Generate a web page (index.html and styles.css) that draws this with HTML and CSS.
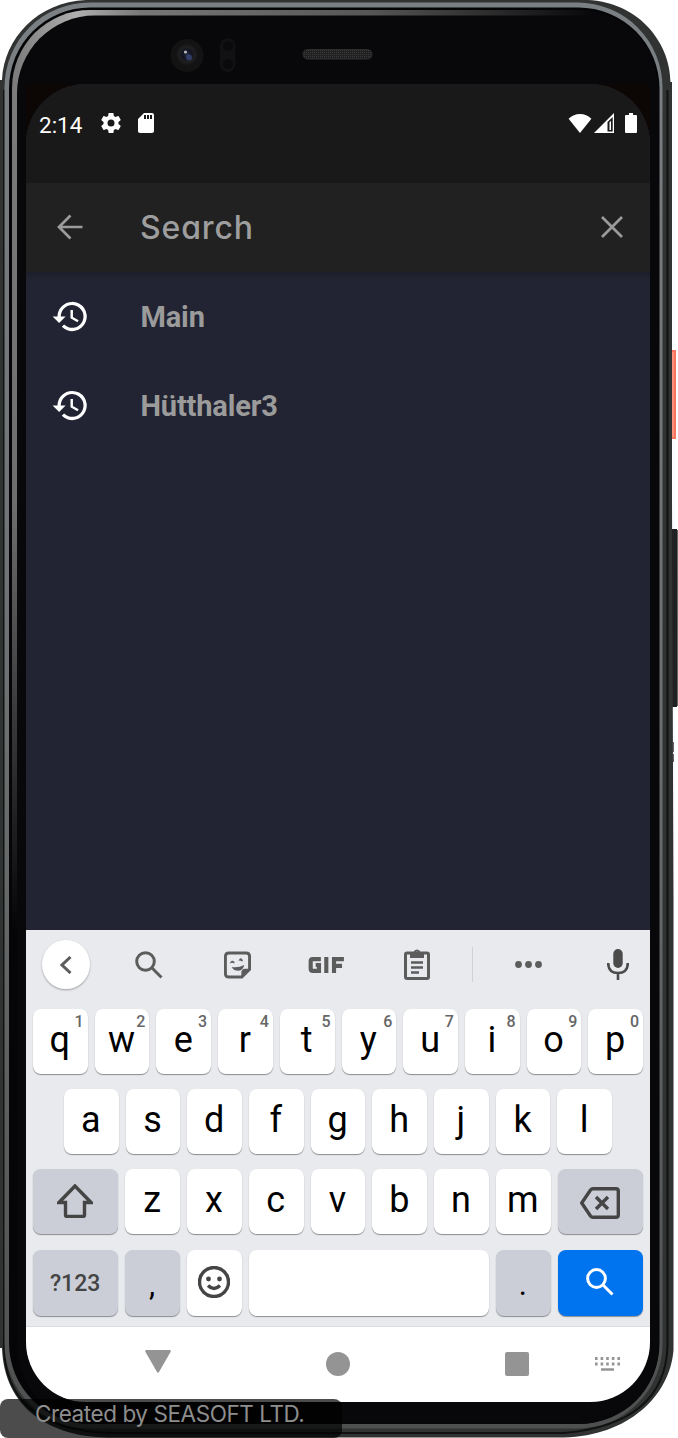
FILE: index.html
```html
<!DOCTYPE html>
<html lang="en">
<head>
<meta charset="utf-8">
<title>Search</title>
<link rel="stylesheet" href="styles.css">
</head>
<body>
<div class="phone">
  <svg class="frame" width="678" height="1438" viewBox="0 0 678 1438" aria-hidden="true">
    <defs>
      <linearGradient id="rim" x1="0" y1="0" x2="0" y2="1"><stop offset="0" stop-color="#7b8084"/><stop offset=".5" stop-color="#6d7071"/><stop offset="1" stop-color="#4e5050"/></linearGradient>
      <linearGradient id="glow" x1="0" y1="0" x2="1" y2="0"><stop offset="0" stop-color="#7c7c7c"/><stop offset=".1" stop-color="#b0b0b0"/><stop offset=".2" stop-color="#777"/><stop offset=".55" stop-color="#575757"/><stop offset=".9" stop-color="#08080a"/></linearGradient>
      <linearGradient id="fade" x1="0" y1="0" x2="0" y2="1"><stop offset="0" stop-color="#fff"/><stop offset=".35" stop-color="#ddd"/><stop offset=".65" stop-color="#000"/></linearGradient>
      <mask id="down"><rect width="678" height="1438" fill="url(#fade)"/></mask>
      <pattern id="mesh" width="2" height="2" patternUnits="userSpaceOnUse"><rect width="2" height="2" fill="#202020"/><path d="M0 0h1v1H0z" fill="#3c3c3c"/></pattern>
      <radialGradient id="lens"><stop offset="0" stop-color="#252c48"/><stop offset=".4" stop-color="#111421"/><stop offset=".7" stop-color="#202022"/><stop offset="1" stop-color="#131314"/></radialGradient>
    </defs>
    <path d="M668 350h8v89h-8z" fill="#f87560"/><path d="M672 352h2v85h-2z" fill="#ff927c"/>
    <path d="M668 529h9v178h-9z" fill="#202221"/><path d="M677 530h1v176h-1zM673 742h1v10h-1zM673 754h1v8h-1z" fill="#666"/>
    <path d="M86 0H588C636 2 670 40 670.500 82H672V500L673.500 900V1350C670 1396 628 1436 564 1437.500H108C50 1437 4 1408 2 1348H0V80H2C4 38 38 2 86 0Z" fill="#303332"/>
    <path d="M667.500 90V1346Q665 1424 564 1433H108Q5 1428 4 1346V90" fill="none" stroke="#101211" stroke-width="2"/>
    <rect x="4.500" y="2.500" width="658" height="1426" rx="85" fill="url(#rim)"/>
    <rect x="9" y="7.500" width="650.500" height="1416.500" rx="81" fill="#050507"/>
    <rect x="12" y="10" width="646" height="1413" rx="78" fill="url(#glow)" mask="url(#down)"/>
    <rect x="17" y="15.500" width="642" height="1408" rx="78" fill="#08080a"/>
    <path d="M26 84h624v70H26z" fill="#0c0605"/>
    <circle cx="187" cy="55.500" r="16.500" fill="#131314"/><circle cx="187" cy="54.500" r="11" fill="url(#lens)"/><circle cx="189" cy="57.500" r="3" fill="#3f4c80" opacity=".7"/><circle cx="185.500" cy="52" r="1.600" fill="#b8b8b8"/>
    <rect x="220" y="38" width="15.500" height="34" rx="7.700" fill="#111113"/><circle cx="228" cy="46" r="5" fill="#0a0a0c"/><circle cx="228" cy="64" r="5" fill="#0a0a0c"/>
    <rect x="303" y="49.500" width="69" height="9.500" rx="4.500" fill="url(#mesh)" stroke="#2c2c2c" stroke-width="1"/>
  </svg>

  <main class="screen">
    <header class="status">
      <div class="status-left">
        <span class="time">2:14</span>
        <svg class="gear" viewBox="2 2 20 20"><path fill-rule="evenodd" d="M19.430 12.980c.04-.32.07-.64.07-.98s-.03-.66-.07-.98l2.110-1.650c.19-.15.24-.42.12-.64l-2-3.460c-.12-.22-.39-.3-.61-.22l-2.490 1c-.52-.4-1.080-.73-1.690-.98l-.38-2.650C14.460 2.180 14.250 2 14 2h-4c-.25 0-.46.18-.49.42l-.38 2.650c-.61.25-1.170.59-1.690.98l-2.490-1c-.23-.09-.49 0-.61.22l-2 3.460c-.13.22-.07.49.12.64l2.110 1.650c-.04.32-.07.65-.07.98s.03.66.07.98l-2.110 1.650c-.19.15-.24.42-.12.64l2 3.460c.12.22.39.3.61.22l2.490-1c.52.4 1.080.73 1.690.98l.38 2.650c.03.24.24.42.49.42h4c.25 0 .46-.18.49-.42l.38-2.650c.61-.25 1.170-.59 1.690-.98l2.490 1c.23.09.49 0 .61-.22l2-3.460c.12-.22.07-.49-.12-.64zM12 15.500a3.500 3.500 0 1 1 0-7 3.500 3.500 0 0 1 0 7z"/></svg>
        <svg class="sd" viewBox="4 2 16 20"><path d="M18 2h-8L4 8v12c0 1.100.9 2 2 2h12c1.100 0 2-.9 2-2V4c0-1.100-.9-2-2-2zm-6 6h-2V4h2zm3 0h-2V4h2zm3 0h-2V4h2z"/></svg>
      </div>
      <div class="status-right">
        <svg class="wifi" viewBox="0 0 24 20"><path d="M0 5Q5 0 12 0T24 5L12 20z"/></svg>
        <svg class="cell" viewBox="0 0 20 20"><path fill-rule="evenodd" d="M0 20L20 0V20zM13.500 18.500H18.700V4L13.500 9zM15.500 9v8h1.500V8z"/></svg>
        <svg class="battery" viewBox="0 0 12 20"><path d="M1 2h3V0h4v2h3q1 0 1 1v16q0 1-1 1H1q-1 0-1-1V3q0-1 1-1z"/></svg>
      </div>
    </header>

    <section class="search">
      <svg class="back" viewBox="0 0 26 26"><path d="M25.500 13H2M13.500 1.500L2 13 13.500 24.500"/></svg>
      <span class="query">Search</span>
      <svg class="clear" viewBox="0 0 22 22"><path d="M1 1l20 20M21 1L1 21"/></svg>
    </section>

    <section class="results">
      <div class="result">
        <svg class="history" viewBox="0 0 24 24"><path d="M13 3a9 9 0 0 0-9 9H1l4 4 4-4H6a7 7 0 1 1 2.060 4.940l-1.420 1.420A9 9 0 1 0 13 3zm-1 5v5l4.280 2.540.72-1.210-3.500-2.080V8z"/></svg>
        <span>Main</span>
      </div>
      <div class="result">
        <svg class="history" viewBox="0 0 24 24"><path d="M13 3a9 9 0 0 0-9 9H1l4 4 4-4H6a7 7 0 1 1 2.060 4.940l-1.420 1.420A9 9 0 1 0 13 3zm-1 5v5l4.280 2.540.72-1.210-3.500-2.080V8z"/></svg>
        <span>Hütthaler3</span>
      </div>
    </section>

    <section class="keyboard">
      <div class="tools">
        <div class="round"><svg width="12" height="18" viewBox="0 0 12 18"><path d="M10.500 1L2 9l8.500 8"/></svg></div>
        <svg class="t-search" viewBox="0 0 28 28"><circle cx="10.500" cy="10.500" r="8.800"/><path d="M16.800 16.800L26.500 26.500"/></svg>
        <svg class="t-sticker" viewBox="0 0 28 28"><path d="M5 1.500H23Q26.500 1.500 26.500 5V18.500L18.500 26.500H5Q1.500 26.500 1.500 23V5Q1.500 1.500 5 1.500Z"/><path class="solid" d="M18 27v-5q0-4 4-4h5zM8 16q7 1 13-2-1 5.500-6 6-5 0-7-4zM6 12.500q1.500-5 5-1.500l-.5 1.500q-2-1.500-4.500 0zM15 9.500q2.500-4.500 4.500-.5l-.5 1.500q-2-1.500-4-1z"/></svg>
        <svg class="t-gif" viewBox="0 0 38 17"><path d="M13 2.200H4.500Q2.200 2.200 2.200 4.500v8q0 2.300 2.300 2.300h6.500V8.500H7.500M18.800 0v17M27 17V2.200h10.500M27 9.500h8.500"/></svg>
        <svg class="t-clip" viewBox="0 0 26 31"><path d="M3 4h20q1.500 0 1.500 1.500V28q0 1.500-1.500 1.500H3Q1.500 29.500 1.500 28V5.500Q1.500 4 3 4z"/><path d="M7 13.500h12M7 18.500h12M7 23.500h8" stroke-width="2.600"/><path class="solid" fill-rule="evenodd" d="M6 3h3.500a3.700 3.700 0 0 1 7 0H20v6H6zM13 2.500a1.300 1.300 0 1 0 0 2.600 1.300 1.300 0 0 0 0-2.600z"/></svg>
        <i class="divider"></i>
        <svg class="t-dots" viewBox="0 0 27 7"><circle cx="3.500" cy="3.500" r="3.400"/><circle cx="13.500" cy="3.500" r="3.400"/><circle cx="23.500" cy="3.500" r="3.400"/></svg>
        <svg class="t-mic" viewBox="0 0 22 31"><rect x="6.300" y="0" width="9.400" height="19" rx="4.700"/><path d="M1.200 14Q1.200 24 11 24T20.800 14M11 24v7"/></svg>
      </div>
      <div class="row">
        <b class="key">q<sup>1</sup></b><b class="key">w<sup>2</sup></b><b class="key">e<sup>3</sup></b><b class="key">r<sup>4</sup></b><b class="key">t<sup>5</sup></b><b class="key">y<sup>6</sup></b><b class="key">u<sup>7</sup></b><b class="key">i<sup>8</sup></b><b class="key">o<sup>9</sup></b><b class="key">p<sup>0</sup></b>
      </div>
      <div class="row inset">
        <b class="key">a</b><b class="key">s</b><b class="key">d</b><b class="key">f</b><b class="key">g</b><b class="key">h</b><b class="key">j</b><b class="key">k</b><b class="key">l</b>
      </div>
      <div class="row">
        <b class="key wide grey"><svg class="shift" viewBox="0 0 36 34"><path d="M18 2L2 18.500h6.500V31q0 1.500 1.500 1.500h16q1.500 0 1.500-1.500V18.500H34z"/></svg></b>
        <b class="key">z</b><b class="key">x</b><b class="key">c</b><b class="key">v</b><b class="key">b</b><b class="key">n</b><b class="key">m</b>
        <b class="key wide grey"><svg class="erase" viewBox="0 0 40 32"><path d="M13 1.700H36Q38.300 1.700 38.300 4V28Q38.300 30.300 36 30.300H13Q11.500 30.300 10.500 29L1.700 16 10.500 3Q11.500 1.700 13 1.700ZM16 10l12 12M28 10L16 22"/></svg></b>
      </div>
      <div class="row last">
        <b class="key wide grey mode">?123</b>
        <b class="key grey punct">,</b>
        <b class="key"><svg class="smile" viewBox="0 0 32 32"><circle cx="16" cy="16" r="14.500"/><path d="M10 19.500q6 6 12 0"/><circle class="eye" cx="10.500" cy="13" r="2.400"/><circle class="eye" cx="21.500" cy="13" r="2.400"/></svg></b>
        <b class="key space"></b>
        <b class="key grey punct">.</b>
        <b class="key wide blue"><svg class="go" viewBox="0 0 28 28"><circle cx="10.500" cy="10.500" r="8.900"/><path d="M16.800 16.800L26.500 26.500"/></svg></b>
      </div>
    </section>

    <nav class="nav">
      <svg class="n-back" viewBox="0 0 26 23"><path d="M1.500 0h23q2 0 1 2L14 22q-1 1.500-2 0L.5 2Q-.5 0 1.500 0z"/></svg>
      <i class="n-home"></i>
      <i class="n-recent"></i>
      <svg class="n-keys" viewBox="0 0 25 14"><path d="M1.300 0v9M6.900 0v9M12.500 0v9M18.100 0v9M23.700 0v9" stroke-width="2.600" stroke-dasharray="3 2.500"/><path d="M6 12.500h13" stroke-width="2.600"/></svg>
    </nav>
  </main>
  <div class="credit">Created by SEASOFT LTD.</div>
</div>
</body>
</html>
```
FILE: styles.css
```css
* { box-sizing: border-box; }
body { margin: 0; background: #fff; font-family: Roboto, "Liberation Sans", sans-serif; }
svg { display: block; flex: none; }
.phone { position: relative; width: 678px; height: 1438px; padding: 84px 28px 36px 26px; overflow: hidden; }
.frame { position: absolute; left: 0; top: 0; }
.screen { position: relative; width: 624px; height: 1318px; border-radius: 60px; overflow: hidden; background: #222433; display: flex; flex-direction: column; }

.status { height: 99px; background: #191919; color: #fff; fill: #fff; display: flex; justify-content: space-between; align-items: flex-start; padding: 28px 13px 0; }
.status-left { display: flex; align-items: center; height: 22px; }
.time { font-size: 22.500px; line-height: 22px; width: 61.500px; padding-top: 3px; }
.gear { width: 20px; height: 20px; margin-right: 17px; }
.sd { width: 16px; height: 20px; }
.status-right { display: flex; align-items: center; height: 22px; }
.wifi { width: 24px; height: 19px; margin-right: 2px; }
.cell { width: 20px; height: 20px; margin-right: 11px; }
.battery { width: 12px; height: 20px; }

.search { height: 89px; background: #212121; display: flex; align-items: center; padding: 0 27px 1px 31px; }
.search svg { fill: none; stroke: #9b9b9b; stroke-width: 2.7; }
.back { width: 26px; height: 26px; }
.query { flex: 1; margin-left: 57px; padding-top: 2px; font: 500 32px/40px Inter, sans-serif; font-feature-settings: "cv11"; letter-spacing: .85px; color: #9e9e9e; }
.clear { width: 22px; height: 22px; }

.results { height: 658px; background: linear-gradient(#1c1e2b, #222433 8px); }
.result { height: 89px; display: flex; align-items: center; padding-left: 25px; font-size: 29px; letter-spacing: -.15px; font-weight: 700; color: #9b9b9b; }
.history { width: 39px; height: 39px; margin-right: 50.500px; fill: #fff; }

.keyboard { height: 397px; background: #e8eaed; border-bottom: 1px solid #dadcdf; display: flex; flex-direction: column; padding: 0 7px; }
.tools { height: 79px; display: flex; align-items: center; padding: 0 14px 10px 9px; fill: none; stroke: #5c5c5c; stroke-width: 3; }
.round { width: 48.500px; height: 48.500px; border-radius: 50%; background: #fff; box-shadow: 0 1px 2px #0005; display: grid; place-items: center; margin-right: 45.500px; }
.t-search { width: 28px; height: 28px; margin-right: 61px; }
.t-sticker { width: 27px; height: 28px; margin-right: 57px; }
.t-gif { width: 37px; height: 16px; margin-right: 59px; stroke-width: 4.400; }
.t-clip { width: 26px; height: 31px; margin-right: 42px; }
.solid { fill: #5c5c5c; stroke: none; }
.divider { width: 1px; height: 35px; background: #cdd2d6; margin-right: 42px; }
.t-dots { width: 27px; height: 7px; margin-right: 65px; fill: #5c5c5c; stroke: none; }
.t-mic { width: 22px; height: 31px; fill: none; stroke: #4b4b4b; stroke-width: 2.6; }
.t-mic rect { fill: #4b4b4b; stroke: none; }
.row { height: 65px; margin-bottom: 15.200px; display: flex; gap: 7px; }
.row.inset { padding: 0 31px; }
.row.last { height: 66px; margin-bottom: 0; }
.key { position: relative; flex: 1 1 0; min-width: 0; border-radius: 8px; background: #fff; box-shadow: 0 1px 1px #0006; display: flex; align-items: center; justify-content: center; font-size: 36px; line-height: 40px; font-weight: 400; color: #000; padding: 0 1px 3px 0; }
.key sup { position: absolute; right: 4px; top: 5px; font-size: 16px; line-height: 16px; font-weight: 500; color: #666; }
.key.wide { flex: none; width: 85.300px; }
.key.grey { background: #cbced7; }
.key.blue { background: #0073ee; }
.key.space { flex: none; width: 240.500px; }
.key.mode { font-size: 23px; font-weight: 500; color: #444; padding: 3px 1px 0 0; }
.key.punct { font-size: 31px; padding-top: 8px; }
.key svg { fill: none; stroke: #454545; stroke-width: 3.400; }
.shift { width: 36px; height: 34px; margin-top: 2px; }
.erase { width: 40px; height: 32px; margin-top: 5px; }
.smile { width: 32px; height: 32px; margin-top: 2px; }
.key .eye { fill: #454545; stroke: none; }
.key .go { width: 28px; height: 28px; margin-top: 2px; stroke: #fff; stroke-width: 3; }

.nav { height: 75px; background: #fff; display: flex; align-items: center; padding: 0 0 2px 119px; fill: #949494; }
.n-back { width: 26px; height: 23px; margin: 0 155px 4px 0; }
.n-home { width: 24px; height: 24px; border-radius: 50%; background: #949494; margin-right: 155px; }
.n-recent { width: 24px; height: 24px; border-radius: 2px; background: #949494; margin-right: 66px; }
.n-keys { width: 25px; height: 14px; stroke: #949494; }

.credit { position: absolute; left: 0; bottom: 0; width: 342px; height: 39px; border-radius: 8px; background: rgba(0,0,0,.7); color: #8e8e8e; font: 400 22.500px/30px Inter, sans-serif; letter-spacing: -.43px; padding-left: 35px; white-space: nowrap; }
```
